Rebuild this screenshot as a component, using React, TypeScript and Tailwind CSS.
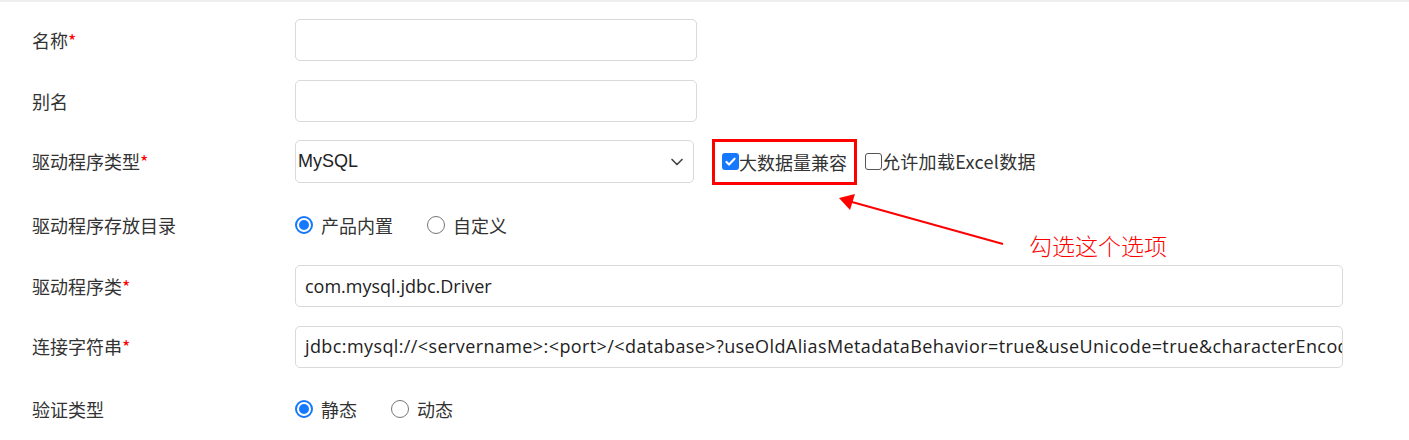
import { ChevronDown } from "lucide-react";

const cjk = "font-['Microsoft_YaHei','Noto_Sans_CJK_SC',sans-serif]";

function Label({ text, required }: { text: string; required?: boolean }) {
    return (
        <div className={`w-[263px] shrink-0 text-[18px] text-[#333] ${cjk}`}>
            {text}
            {required && <span className="text-[#ff0000]">*</span>}
        </div>
    );
}

function Radio({ checked, label }: { checked?: boolean; label: string }) {
    return (
        <label className="flex items-center gap-[8px]">
            {checked ? (
                <span className="w-[18px] h-[18px] rounded-full border-[2px] border-[#1677ff] flex items-center justify-center">
                    <span className="w-[10px] h-[10px] rounded-full bg-[#1677ff]" />
                </span>
            ) : (
                <span className="w-[18px] h-[18px] rounded-full border border-[#767676]" />
            )}
            <span className="text-[18px] text-[#333]">{label}</span>
        </label>
    );
}

function TextBox({ value, wide, spaced }: { value?: string; wide?: boolean; spaced?: boolean }) {
    return (
        <div
            className={`${wide ? "w-[1048px]" : "w-[402px]"} ${spaced ? "tracking-[0.4px]" : ""} h-[42px] border border-[#d9d9d9] rounded-[5px] flex items-center px-[9px] overflow-hidden whitespace-nowrap text-[18px] text-[#222] font-['Open_Sans',sans-serif]`}
        >
            {value}
        </div>
    );
}

export default function App() {
    return (
        <div className={`relative w-[1409px] h-[440px] bg-white border-t-[2px] border-[#eeeeee] overflow-hidden ${cjk}`}>
            <div className="flex flex-col pl-[32px] pt-[8px]">
                {/* 名称 */}
                <div className="h-[60px] flex items-center">
                    <Label text="名称" required />
                    <TextBox />
                </div>

                <div className="h-[62px] flex items-center">
                    <Label text="别名" />
                    <TextBox />
                </div>

                <div className="h-[59px] flex items-center">
                    <Label text="驱动程序类型" required />
                    <div className="w-[399px] h-[43px] border border-[#d9d9d9] rounded-[5px] flex items-center justify-between pl-[2px] pr-[6px]">
                        <span className="text-[18px] text-[#222] font-['Liberation_Sans',sans-serif]">MySQL</span>
                        <ChevronDown className="w-[20px] h-[20px] text-[#444]" strokeWidth={2} />
                    </div>
                    <div className="ml-[18px] h-[46px] border-[3px] border-[#ff0000] flex items-center pl-[7px] pr-[7px]">
                        <span className="w-[17px] h-[17px] rounded-[3px] bg-[#1677ff] flex items-center justify-center">
                            <svg viewBox="0 0 16 16" className="w-[13px] h-[13px]">
                                <path d="M3 8.5l3.2 3.2L13 4.5" fill="none" stroke="white" strokeWidth="2.6" strokeLinecap="round" strokeLinejoin="round" />
                            </svg>
                        </span>
                        <span className="text-[18px] text-[#333] leading-none">大数据量兼容</span>
                    </div>
                    <div className="ml-[8px] flex items-center">
                        <span className="w-[17px] h-[17px] rounded-[3px] border border-[#555] bg-white" />
                        <span className="text-[18px] text-[#333] tracking-[0.3px]">允许加载Excel数据</span>
                    </div>
                </div>

                <div className="h-[68px] flex items-center">
                    <Label text="驱动程序存放目录" />
                    <div className="flex items-center gap-[34px]">
                        <Radio checked label="产品内置" />
                        <Radio label="自定义" />
                    </div>
                </div>

                <div className="h-[54px] flex items-center">
                    <Label text="驱动程序类" required />
                    <TextBox wide value="com.mysql.jdbc.Driver" />
                </div>

                <div className="h-[67px] flex items-center">
                    <Label text="连接字符串" required />
                    <TextBox
                        wide
                        spaced
                        value="jdbc:mysql://<servername>:<port>/<database>?useOldAliasMetadataBehavior=true&useUnicode=true&characterEncoding=UTF-8"
                    />
                </div>

                <div className="h-[58px] flex items-center">
                    <Label text="验证类型" />
                    <div className="flex items-center gap-[34px]">
                        <Radio checked label="静态" />
                        <Radio label="动态" />
                    </div>
                </div>
            </div>

            {/* 标注箭头 */}
            <svg className="absolute left-0 top-0 pointer-events-none" width="1409" height="440">
                <line x1="1003" y1="242" x2="852" y2="200" stroke="#ff0000" strokeWidth="2" />
                <polygon points="839,196 855,192 850,208" fill="#ff0000" />
            </svg>
            <div className="absolute left-[1029px] top-[232px] text-[23px] font-light text-[#ff0000] leading-none">
                勾选这个选项
            </div>
        </div>
    );
}
